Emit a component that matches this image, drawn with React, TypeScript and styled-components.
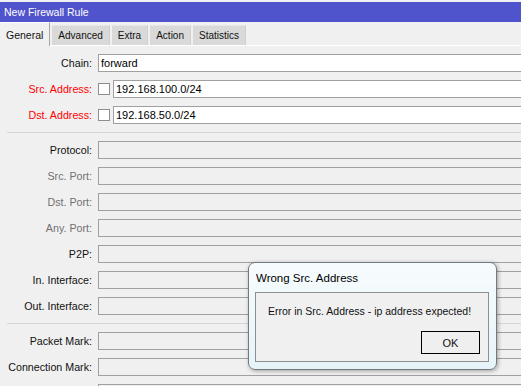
import React from 'react';
import styled, { createGlobalStyle } from 'styled-components';

const GlobalStyle = createGlobalStyle`
  html, body {
    margin: 0;
    padding: 0;
    overflow: hidden;
    background: #f0f0f0;
    font-family: "Liberation Sans", Arial, sans-serif;
  }
`;

const Window = styled.div`
  position: relative;
  width: 521px;
  height: 386px;
  overflow: hidden;
  background: #f0f0f0;
  padding-top: 2px;
  box-sizing: border-box;
`;

const TitleBar = styled.div`
  height: 20px;
  background: #4f53cc;
  color: #fff;
  font-size: 10.5px;
  padding-left: 4px;
  display: flex;
  align-items: center;
`;

const TabStrip = styled.div`
  display: flex;
  align-items: flex-end;
  height: 24px;
  border-bottom: 1px solid #fff;
  box-sizing: border-box;
`;

const Tab = styled.div<{ $active?: boolean }>`
  height: ${(p) => (p.$active ? '24px' : '20px')};
  margin-left: ${(p) => (p.$active ? '0' : '2px')};
  margin-bottom: ${(p) => (p.$active ? '-1px' : '0')};
  padding: 0 6px;
  display: flex;
  align-items: center;
  font-size: ${(p) => (p.$active ? '10.5px' : '10px')};
  color: #111;
  background: ${(p) => (p.$active ? '#f0f0f0' : '#d9d9d9')};
  border-right: 1px solid ${(p) => (p.$active ? '#a8a8a8' : '#cfcfcf')};
  border-top: 1px solid ${(p) => (p.$active ? '#fdfdfd' : '#e6e6e6')};
  box-sizing: border-box;
`;

const Form = styled.div`
  width: 560px;
  padding-top: 8px;
  display: grid;
  grid-template-columns: 92px 1fr;
  column-gap: 6px;
  row-gap: 8px;
`;

const Label = styled.div<{ $tone: 'dark' | 'red' | 'grey' }>`
  height: 18px;
  display: flex;
  align-items: center;
  justify-content: flex-end;
  font-size: 10.7px;
  white-space: nowrap;
  color: ${(p) => (p.$tone === 'red' ? '#f00' : p.$tone === 'grey' ? '#707070' : '#111')};
`;

const FieldCell = styled.div`
  display: flex;
  align-items: center;
  gap: 3px;
  height: 18px;
`;

const Check = styled.div`
  width: 12px;
  height: 12px;
  box-sizing: border-box;
  border: 1px solid #8e8e8e;
  background: #fff;
  flex: none;
`;

const Field = styled.div<{ $filled?: boolean }>`
  flex: 1;
  height: 18px;
  box-sizing: border-box;
  border: 1px solid #a0a0a0;
  background: ${(p) => (p.$filled ? '#fff' : '#f0f0f0')};
  padding-left: 2px;
  font-size: 11px;
  color: #000;
  display: flex;
  align-items: center;
`;

const Separator = styled.div`
  grid-column: 1 / -1;
  margin-left: 7px;
  height: 1px;
  background: #d6d6d6;
`;

const Dialog = styled.div`
  position: absolute;
  left: 248px;
  top: 262px;
  width: 249px;
  height: 108px;
  box-sizing: border-box;
  border: 1px solid #707a80;
  border-radius: 7px;
  background: linear-gradient(#f7fcfe, #e6f4f9);
  box-shadow: 1px 1px 4px rgba(0, 0, 0, 0.35);
  padding: 0 7px 7px 6px;
  display: flex;
  flex-direction: column;
`;

const DialogTitle = styled.div`
  height: 28px;
  display: flex;
  align-items: center;
  padding-left: 1px;
  padding-top: 1px;
  font-size: 11.5px;
  color: #000;
`;

const DialogBody = styled.div`
  flex: 1;
  border: 1px solid #8f8f8f;
  background: #f0f0f0;
  padding: 12px 8px 7px 12px;
  display: flex;
  flex-direction: column;
`;

const Message = styled.div`
  font-size: 10.5px;
  color: #111;
`;

const OkButton = styled.div`
  margin-top: auto;
  align-self: flex-end;
  width: 59px;
  height: 23px;
  box-sizing: border-box;
  border: 1px solid #000;
  background: #efefef;
  font-size: 11px;
  color: #111;
  display: flex;
  align-items: center;
  justify-content: center;
`;

type Row =
  | { kind: 'sep' }
  | { kind: 'field'; label: string; tone: 'dark' | 'red' | 'grey'; value?: string; check?: boolean };

const rows: Row[] = [
  { kind: 'field', label: 'Chain:', tone: 'dark', value: 'forward' },
  { kind: 'field', label: 'Src. Address:', tone: 'red', value: '192.168.100.0/24', check: true },
  { kind: 'field', label: 'Dst. Address:', tone: 'red', value: '192.168.50.0/24', check: true },
  { kind: 'sep' },
  { kind: 'field', label: 'Protocol:', tone: 'dark' },
  { kind: 'field', label: 'Src. Port:', tone: 'grey' },
  { kind: 'field', label: 'Dst. Port:', tone: 'grey' },
  { kind: 'field', label: 'Any. Port:', tone: 'grey' },
  { kind: 'field', label: 'P2P:', tone: 'dark' },
  { kind: 'field', label: 'In. Interface:', tone: 'dark' },
  { kind: 'field', label: 'Out. Interface:', tone: 'dark' },
  { kind: 'sep' },
  { kind: 'field', label: 'Packet Mark:', tone: 'dark' },
  { kind: 'field', label: 'Connection Mark:', tone: 'dark' },
  { kind: 'field', label: '', tone: 'dark' },
];

const tabs = ['General', 'Advanced', 'Extra', 'Action', 'Statistics'];

const App = () => {
  return (
    <Window>
      <GlobalStyle />
      <TitleBar>New Firewall Rule</TitleBar>
      <TabStrip>
        {tabs.map((t, i) => (
          <Tab key={t} $active={i === 0}>
            {t}
          </Tab>
        ))}
      </TabStrip>
      <Form>
        {rows.map((r, i) =>
          r.kind === 'sep' ? (
            <Separator key={i} />
          ) : (
            <React.Fragment key={i}>
              <Label $tone={r.tone}>{r.label}</Label>
              <FieldCell>
                {r.check && <Check />}
                <Field $filled={r.value !== undefined}>{r.value}</Field>
              </FieldCell>
            </React.Fragment>
          )
        )}
      </Form>
      <Dialog>
        <DialogTitle>Wrong Src. Address</DialogTitle>
        <DialogBody>
          <Message>Error in Src. Address - ip address expected!</Message>
          <OkButton>OK</OkButton>
        </DialogBody>
      </Dialog>
    </Window>
  );
};

export default App;
